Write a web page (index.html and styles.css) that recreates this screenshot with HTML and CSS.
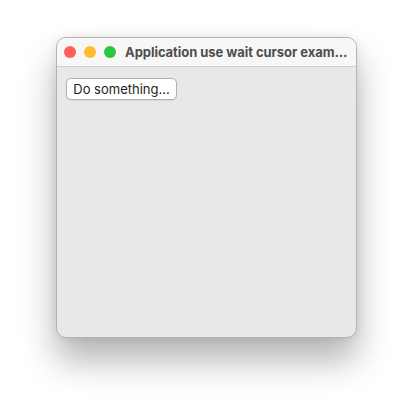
FILE: index.html
```html
<!DOCTYPE html>
<html>
<head>
<meta charset="utf-8">
<link rel="stylesheet" href="styles.css">
</head>
<body>
<div class="stage">
  <div class="window">
    <div class="titlebar">
      <div class="lights">
        <span class="light red"></span>
        <span class="light yellow"></span>
        <span class="light green"></span>
      </div>
      <div class="title">Application use wait cursor exam...</div>
    </div>
    <div class="content">
      <button class="btn">Do something...</button>
    </div>
  </div>
</div>
</body>
</html>
```

FILE: styles.css
```css
html, body {
  margin: 0;
  padding: 0;
  background: #ffffff;
  width: 412px;
  height: 412px;
  overflow: hidden;
}
.stage {
  padding: 37px 0 0 56px;
}
.window {
  width: 299px;
  height: 299px;
  border: 1px solid #b4b4b4;
  border-radius: 10px;
  background: #e8e8e8;
  overflow: hidden;
  display: flex;
  flex-direction: column;
  box-shadow: 0 22px 35px rgba(0,0,0,0.3), 0 0 10px rgba(0,0,0,0.08);
}
.titlebar {
  height: 28px;
  background: #f7f7f7;
  border-bottom: 1px solid #cfcfcf;
  display: flex;
  align-items: center;
  padding-left: 7px;
  gap: 9px;
  flex-shrink: 0;
}
.lights {
  display: flex;
  gap: 8px;
}
.light {
  width: 12px;
  height: 12px;
  border-radius: 50%;
  display: block;
}
.red { background: #fe5f57; }
.yellow { background: #febc2e; }
.green { background: #28c840; }
.title {
  font-family: Inter, "Liberation Sans", sans-serif;
  font-weight: 700;
  font-size: 13px;
  letter-spacing: -0.05px;
  color: #4e4e4e;
  white-space: nowrap;
}
.content {
  padding: 11px 9px;
}
.btn {
  font-family: Inter, "Liberation Sans", sans-serif;
  font-size: 13px;
  color: #1e1e1e;
  background: #ffffff;
  border: 1px solid #b0b0b0;
  border-radius: 5px;
  height: 22px;
  width: 111px;
  padding: 0;
  box-shadow: 0 0.5px 1px rgba(0,0,0,0.08);
}
```
